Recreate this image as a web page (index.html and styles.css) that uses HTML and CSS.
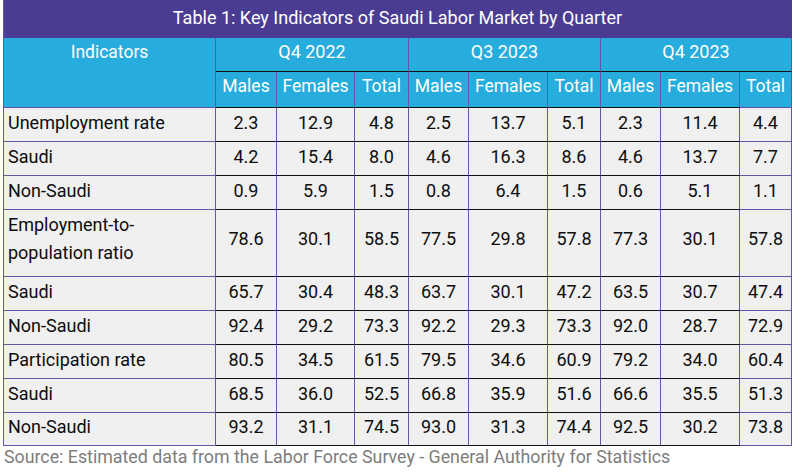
FILE: index.html
```html
<!DOCTYPE html>
<html lang="en">
<head>
<meta charset="utf-8">
<title>Key Indicators of Saudi Labor Market by Quarter</title>
<link rel="stylesheet" href="styles.css">
</head>
<body>
<div class="table">
  <div class="title">Table 1: Key Indicators of Saudi Labor Market by Quarter</div>

  <div class="h ind-head">Indicators</div>
  <div class="h q">Q4 2022</div>
  <div class="h q">Q3 2023</div>
  <div class="h q last">Q4 2023</div>

  <div class="h s">Males</div><div class="h s">Females</div><div class="h s">Total</div>
  <div class="h s">Males</div><div class="h s">Females</div><div class="h s">Total</div>
  <div class="h s">Males</div><div class="h s">Females</div><div class="h s end">Total</div>

  <div class="l">Unemployment rate</div>
  <div class="d">2.3</div><div class="d">12.9</div><div class="d">4.8</div>
  <div class="d">2.5</div><div class="d">13.7</div><div class="d">5.1</div>
  <div class="d">2.3</div><div class="d">11.4</div><div class="d end">4.4</div>

  <div class="l">Saudi</div>
  <div class="d">4.2</div><div class="d">15.4</div><div class="d">8.0</div>
  <div class="d">4.6</div><div class="d">16.3</div><div class="d">8.6</div>
  <div class="d">4.6</div><div class="d">13.7</div><div class="d end">7.7</div>

  <div class="l">Non-Saudi</div>
  <div class="d">0.9</div><div class="d">5.9</div><div class="d">1.5</div>
  <div class="d">0.8</div><div class="d">6.4</div><div class="d">1.5</div>
  <div class="d">0.6</div><div class="d">5.1</div><div class="d end">1.1</div>

  <div class="l tall">Employment-to-<br>population ratio</div>
  <div class="d tall">78.6</div><div class="d tall">30.1</div><div class="d tall">58.5</div>
  <div class="d tall">77.5</div><div class="d tall">29.8</div><div class="d tall">57.8</div>
  <div class="d tall">77.3</div><div class="d tall">30.1</div><div class="d tall end">57.8</div>

  <div class="l">Saudi</div>
  <div class="d">65.7</div><div class="d">30.4</div><div class="d">48.3</div>
  <div class="d">63.7</div><div class="d">30.1</div><div class="d">47.2</div>
  <div class="d">63.5</div><div class="d">30.7</div><div class="d end">47.4</div>

  <div class="l">Non-Saudi</div>
  <div class="d">92.4</div><div class="d">29.2</div><div class="d">73.3</div>
  <div class="d">92.2</div><div class="d">29.3</div><div class="d">73.3</div>
  <div class="d">92.0</div><div class="d">28.7</div><div class="d end">72.9</div>

  <div class="l">Participation rate</div>
  <div class="d">80.5</div><div class="d">34.5</div><div class="d">61.5</div>
  <div class="d">79.5</div><div class="d">34.6</div><div class="d">60.9</div>
  <div class="d">79.2</div><div class="d">34.0</div><div class="d end">60.4</div>

  <div class="l">Saudi</div>
  <div class="d">68.5</div><div class="d">36.0</div><div class="d">52.5</div>
  <div class="d">66.8</div><div class="d">35.9</div><div class="d">51.6</div>
  <div class="d">66.6</div><div class="d">35.5</div><div class="d end">51.3</div>

  <div class="l">Non-Saudi</div>
  <div class="d">93.2</div><div class="d">31.1</div><div class="d">74.5</div>
  <div class="d">93.0</div><div class="d">31.3</div><div class="d">74.4</div>
  <div class="d">92.5</div><div class="d">30.2</div><div class="d end">73.8</div>
</div>
<p class="source">Source: Estimated data from the Labor Force Survey - General Authority for Statistics</p>
</body>
</html>
```

FILE: styles.css
```css
html, body {
  margin: 0;
  padding: 0;
  background: #ffffff;
}

body {
  padding-left: 3px;
  font-family: Roboto, "Liberation Sans", sans-serif;
}

.table {
  display: grid;
  width: 789px;
  box-sizing: border-box;
  grid-template-columns: 212px 61px 78px 54px 60px 79px 53px 60px 79px 52px;
  grid-template-rows: 38px 34px 36px 34px 34px 34px 67px 34px 34px 34px 34px 33px;
  border-left: 1px solid #6455a8;
}

.table > div {
  box-sizing: border-box;
  display: flex;
  align-items: center;
  justify-content: center;
  border-right: 1px solid #6455a8;
  border-bottom: 1px solid #111111;
  padding-bottom: 5px;
}

.table > .title {
  grid-column: 1 / -1;
  background: #4a3c92;
  color: #ffffff;
  font-size: 18px;
  border-right: 1px solid #4a3c92;
  border-bottom: 0;
  padding-bottom: 4px;
}

.table > .h {
  background: #26acdd;
  color: #ffffff;
  font-size: 17.5px;
}

.table > .ind-head {
  grid-row: span 2;
  align-items: flex-start;
  padding-top: 4px;
  border-bottom-color: #6455a8;
}

.table > .q {
  grid-column: span 3;
  font-size: 18px;
  padding-bottom: 6px;
}

.table > .s {
  padding-bottom: 7px;
}

.table > .end {
  border-bottom-color: #6455a8;
}

.table > .l,
.table > .d {
  background: #f0f0f0;
  color: #0d0d0d;
  font-size: 18px;
}

.table > .l {
  justify-content: flex-start;
  padding-left: 4px;
  border-bottom-color: #6455a8;
}

.table > .tall {
  line-height: 28px;
  padding-bottom: 8px;
}

.source {
  margin: 0 0 0 1px;
  color: #7d7d7d;
  font-size: 17.8px;
  line-height: 22px;
}
```
